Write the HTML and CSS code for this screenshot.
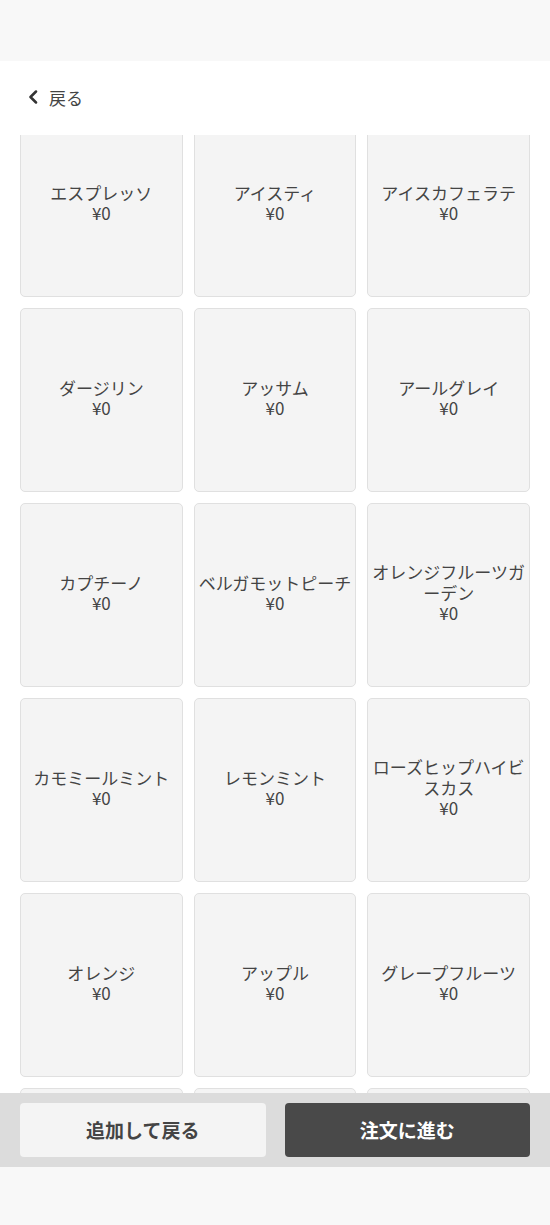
FILE: index.html
```html
<!DOCTYPE html>
<html lang="ja">
<head>
<meta charset="utf-8">
<title>メニュー</title>
<link rel="stylesheet" href="styles.css">
</head>
<body>
<div class="app">
  <div class="topbar"></div>
  <header class="header">
    <button class="back">
      <svg class="chev" width="12" height="14" viewBox="0 0 12 14"><path d="M9 1.5 L3.5 7 L9 12.5" fill="none" stroke="#333" stroke-width="2.5" stroke-linecap="round" stroke-linejoin="round"/></svg>
      <span>戻る</span>
    </button>
  </header>
  <main class="scroller">
    <div class="grid">
      <div class="card"><div class="name">エスプレッソ</div><div class="price">¥0</div></div>
      <div class="card"><div class="name">アイスティ</div><div class="price">¥0</div></div>
      <div class="card"><div class="name">アイスカフェラテ</div><div class="price">¥0</div></div>
      <div class="card"><div class="name">ダージリン</div><div class="price">¥0</div></div>
      <div class="card"><div class="name">アッサム</div><div class="price">¥0</div></div>
      <div class="card"><div class="name">アールグレイ</div><div class="price">¥0</div></div>
      <div class="card"><div class="name">カプチーノ</div><div class="price">¥0</div></div>
      <div class="card"><div class="name">ベルガモットピーチ</div><div class="price">¥0</div></div>
      <div class="card"><div class="name">オレンジフルーツガーデン</div><div class="price">¥0</div></div>
      <div class="card"><div class="name">カモミールミント</div><div class="price">¥0</div></div>
      <div class="card"><div class="name">レモンミント</div><div class="price">¥0</div></div>
      <div class="card"><div class="name">ローズヒップハイビスカス</div><div class="price">¥0</div></div>
      <div class="card"><div class="name">オレンジ</div><div class="price">¥0</div></div>
      <div class="card"><div class="name">アップル</div><div class="price">¥0</div></div>
      <div class="card"><div class="name">グレープフルーツ</div><div class="price">¥0</div></div>
      <div class="card"></div>
      <div class="card"></div>
      <div class="card"></div>
    </div>
  </main>
  <footer class="actions">
    <button class="btn btn-light">追加して戻る</button>
    <button class="btn btn-dark">注文に進む</button>
  </footer>
  <div class="bottombar"></div>
</div>
</body>
</html>
```
FILE: styles.css
```css
* { box-sizing: border-box; }
html, body { margin: 0; padding: 0; }
body {
  font-family: "Noto Sans CJK JP", "Noto Sans", sans-serif;
  color: #333;
  background: #f8f8f8;
}
.app {
  width: 550px;
  height: 1225px;
  display: flex;
  flex-direction: column;
}
.topbar {
  height: 61px;
  background: #f8f8f8;
  flex: none;
}
.header {
  height: 74px;
  background: #fff;
  flex: none;
  display: flex;
  align-items: center;
  padding: 0 0 0 27px;
}
.back {
  display: flex;
  align-items: center;
  gap: 10px;
  border: 0;
  background: none;
  padding: 0 0 2px;
  font-family: inherit;
  font-size: 17px;
  color: #444;
  line-height: 1;
}
.chev { display: block; }
.scroller {
  height: 958px;
  flex: none;
  overflow: hidden;
  background: #fff;
}
.grid {
  margin-top: -22px;
  padding: 0 20px;
  display: grid;
  grid-template-columns: repeat(3, 1fr);
  grid-auto-rows: 184px;
  gap: 11px;
}
.card {
  background: #f4f4f4;
  border: 1px solid #e0e0e0;
  border-radius: 5px;
  display: flex;
  flex-direction: column;
  justify-content: center;
  align-items: center;
  text-align: center;
  padding: 0 4px 4px;
  font-size: 17px;
  line-height: 20.5px;
  color: #444;
}
.actions {
  height: 74px;
  flex: none;
  background: #dcdcdc;
  padding: 10px 20px;
  display: grid;
  grid-template-columns: 1fr 1fr;
  gap: 19px;
}
.btn {
  border: 0;
  border-radius: 4px;
  font-family: inherit;
  font-size: 19px;
  font-weight: 700;
  height: 54px;
  padding-bottom: 3px;
}
.btn-light { background: #f4f4f4; color: #444; }
.btn-dark { background: #494949; color: #fff; }
.bottombar {
  flex: 1;
  background: #f8f8f8;
}
```
